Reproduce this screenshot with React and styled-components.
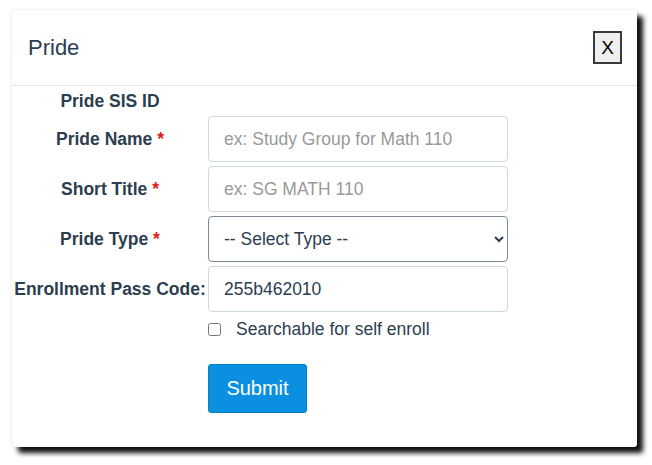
import styled, { createGlobalStyle } from "styled-components";

const GlobalStyle = createGlobalStyle`
  body {
    margin: 0;
    background: #fff;
    font-family: "Liberation Sans", Arial, sans-serif;
  }
`;

const Page = styled.div`
  padding: 10px 15px 18px 12px;
`;

const Card = styled.div`
  width: 625px;
  height: 437px;
  background: #fff;
  border-radius: 3px;
  box-shadow: 6px 6px 5px #111, 0 0 3px rgba(0, 0, 0, 0.12);
  display: flex;
  flex-direction: column;
`;

const Header = styled.div`
  height: 76px;
  box-sizing: border-box;
  padding: 0 15px 0 16px;
  border-bottom: 1px solid #e6e6e6;
  display: flex;
  align-items: center;
  justify-content: space-between;
`;

const Title = styled.h4`
  margin: 0;
  font-size: 22px;
  font-weight: normal;
  color: #2c3e50;
`;

const CloseButton = styled.button`
  width: 29px;
  height: 33px;
  padding: 0;
  background: #efefef;
  border: 2px solid #3a3a3a;
  font-family: "Liberation Sans", Arial, sans-serif;
  font-size: 19px;
  color: #000;
  cursor: pointer;
`;

const Form = styled.form`
  padding-top: 4px;
  display: grid;
  grid-template-columns: 196px 300px;
  row-gap: 4px;
  align-items: center;
`;

const Label = styled.label`
  text-align: center;
  font-weight: bold;
  font-size: 17.5px;
  color: #2c3e50;
  height: ${(p) => (p.$short ? "22px" : "auto")};
  line-height: 22px;
  white-space: nowrap;
`;

const Star = styled.span`
  color: #e31b1b;
`;

const Input = styled.input`
  box-sizing: border-box;
  height: 46px;
  width: 300px;
  padding: 0 15px;
  border: 1px solid #cdd8e3;
  border-radius: 4px;
  font-family: "Liberation Sans", Arial, sans-serif;
  font-size: 17.5px;
  color: #2c3e50;
  &::placeholder {
    color: #999;
  }
`;

const Select = styled.select`
  box-sizing: border-box;
  height: 46px;
  width: 300px;
  padding: 0 10px 0 11px;
  border: 1px solid #7d8b99;
  border-radius: 4px;
  background: #fff;
  font-family: "Liberation Sans", Arial, sans-serif;
  font-size: 17.5px;
  color: #2c3e50;
`;

const CheckRow = styled.div`
  grid-column: 2;
  display: flex;
  align-items: center;
  gap: 15px;
  margin-top: 3px;
  font-size: 17.5px;
  color: #2c3e50;
  input {
    margin: 0;
    width: 13px;
    height: 13px;
  }
`;

const SubmitButton = styled.button`
  grid-column: 2;
  justify-self: start;
  margin-top: 20px;
  width: 99px;
  height: 49px;
  background: #0b8fe0;
  border: 1px solid #0a7dc4;
  border-radius: 3px;
  color: #fff;
  font-family: "Liberation Sans", Arial, sans-serif;
  font-size: 20px;
  cursor: pointer;
`;

const Spacer = styled.div``;

export default function App() {
  return (
    <Page>
      <GlobalStyle />
      <Card>
        <Header>
          <Title>Pride</Title>
          <CloseButton>X</CloseButton>
        </Header>
        <Form onSubmit={(e) => e.preventDefault()}>
          <Label $short>Pride SIS ID</Label>
          <Spacer />
          <Label>
            Pride Name <Star>*</Star>
          </Label>
          <Input placeholder="ex: Study Group for Math 110" />
          <Label>
            Short Title <Star>*</Star>
          </Label>
          <Input placeholder="ex: SG MATH 110" />
          <Label>
            Pride Type <Star>*</Star>
          </Label>
          <Select defaultValue="">
            <option value="">-- Select Type --</option>
          </Select>
          <Label>Enrollment Pass Code:</Label>
          <Input defaultValue="255b462010" />
          <CheckRow>
            <input type="checkbox" />
            <span>Searchable for self enroll</span>
          </CheckRow>
          <SubmitButton type="submit">Submit</SubmitButton>
        </Form>
      </Card>
    </Page>
  );
}
